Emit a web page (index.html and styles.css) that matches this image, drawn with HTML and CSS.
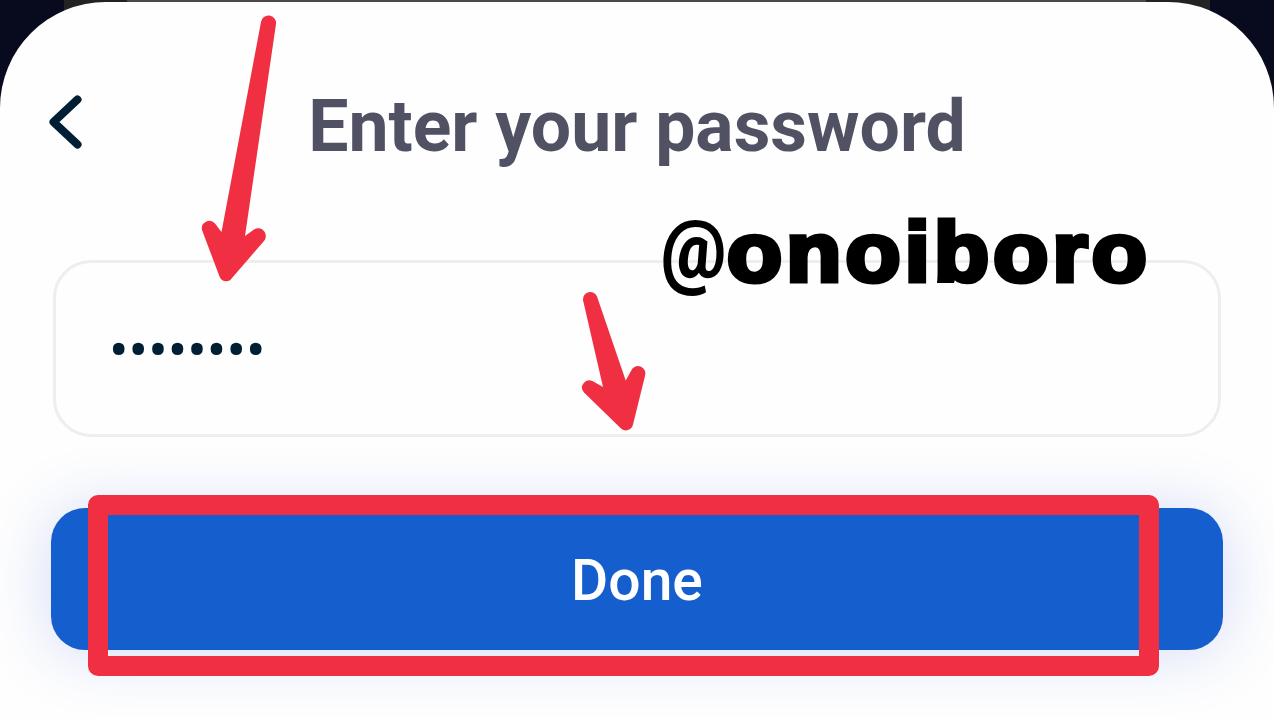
FILE: index.html
```html
<!DOCTYPE html>
<html lang="en">
<head>
    <meta charset="UTF-8">
    <meta name="viewport" content="width=device-width, initial-scale=1.0">
    <title>Enter your password</title>

    <link rel="stylesheet" href="styles.css">
</head>
<body>

<div class="sheet">
    <div class="header">
        <button class="back" aria-label="Back">
            <svg width="36" height="56" viewBox="0 0 36 56">
                <path d="M29.500 5.500 L5.500 28 L29.500 50.500" />
            </svg>
        </button>
        <h1 class="title">Enter your password</h1>
    </div>
    <div class="field"><span class="dots">••••••••</span></div>
    <button class="done">Done</button>
</div>

<!-- notes drawn over the form -->
<div class="handle"><span class="at">@</span><span class="name">onoiboro</span></div>
<div class="frame"></div>
<svg class="arrows" width="1274" height="720" viewBox="0 0 1274 720">
    <path d="M261 22 A7.5 7.5 0 0 1 276 24 L245 236 L254 229.500 A7.700 7.700 0 0 1 264 241 L232 278 A7 7 0 0 1 219.500 276.500 L202 230 A7.500 7.500 0 0 1 215 223.500 L221.500 232 Z" />
    <path d="M583 300 A7.300 7.300 0 0 1 597 296.500 L625.700 380.500 L631 371 A7.400 7.400 0 0 1 645 376 L633 424.500 A7.300 7.300 0 0 1 620.500 428 L584 392.500 A7.300 7.300 0 0 1 592.500 381 L603 387 Z" />
</svg>

</body>
</html>
```
FILE: styles.css
```css
* {
    box-sizing: border-box;
}
body {
    margin: 0;
    height: 720px;
    padding-top: 2px;
    overflow: hidden;
    position: relative;
    background: linear-gradient(to right, #080a1d 64px, #232323 64px, #232323 127px, #4b484a 127px, #4b484a 1146px, #232323 1146px, #232323 1210px, #080a1d 1210px);
    font-family: Roboto, sans-serif;
}
button {
    border: none;
    padding: 0;
    font-family: inherit;
}
.sheet {
    height: 718px;
    padding: 0 51px;
    border-radius: 106px 106px 0 0;
    background-color: #fefefe;
}
.header {
    height: 258px;
    padding-top: 83px;
    display: grid;
    grid-template-columns: 36px 1fr 36px;
    align-items: start;
}
.back {
    margin: 9px 0 0 -4px;
    background: none;
}
.back svg {
    display: block;
    margin-left: 1px;
}
.back path {
    fill: none;
    stroke: #001e34;
    stroke-width: 8;
    stroke-linecap: round;
    stroke-linejoin: round;
}
.title {
    margin: 0;
    font-size: 71.5px;
    line-height: 84px;
    font-weight: 700;
    color: #505264;
    text-align: center;
    white-space: nowrap;
}
.field {
    height: 177px;
    margin: 0 2px;
    padding: 2px 0 0 53px;
    display: flex;
    align-items: center;
    border: 3px solid #eee;
    border-radius: 38px;
}
.dots {
    font-size: 58px;
    line-height: 60px;
    color: #001e34;
}
.done {
    display: block;
    width: 1172px;
    height: 142px;
    margin-top: 70.5px;
    padding-top: 4px;
    border-radius: 34px;
    background-color: #155ecd;
    box-shadow: 0 2px 64px rgba(60, 90, 225, 0.22);
    font-size: 57px;
    font-weight: 500;
    color: #fff;
}
.handle {
    position: absolute;
    left: 661px;
    top: 201px;
    display: flex;
    align-items: baseline;
    line-height: 104px;
    color: #000;
    white-space: nowrap;
}
.at {
    width: 66px;
    font-size: 83px;
    font-weight: 900;
    transform: translateY(-3px) scaleX(0.88);
    transform-origin: left;
}
.name {
    font-family: "Liberation Sans", sans-serif;
    font-size: 83px;
    font-weight: 700;
    letter-spacing: 3.9px;
    -webkit-text-stroke: 5px #000;
    transform: scaleX(1.085);
    transform-origin: left;
}
.frame {
    position: absolute;
    left: 88px;
    top: 495px;
    width: 1071px;
    height: 181px;
    border: 20px solid #f02f42;
    border-radius: 10px;
}
.arrows {
    position: absolute;
    left: 0;
    top: 0;
    fill: #f02f42;
}
```
